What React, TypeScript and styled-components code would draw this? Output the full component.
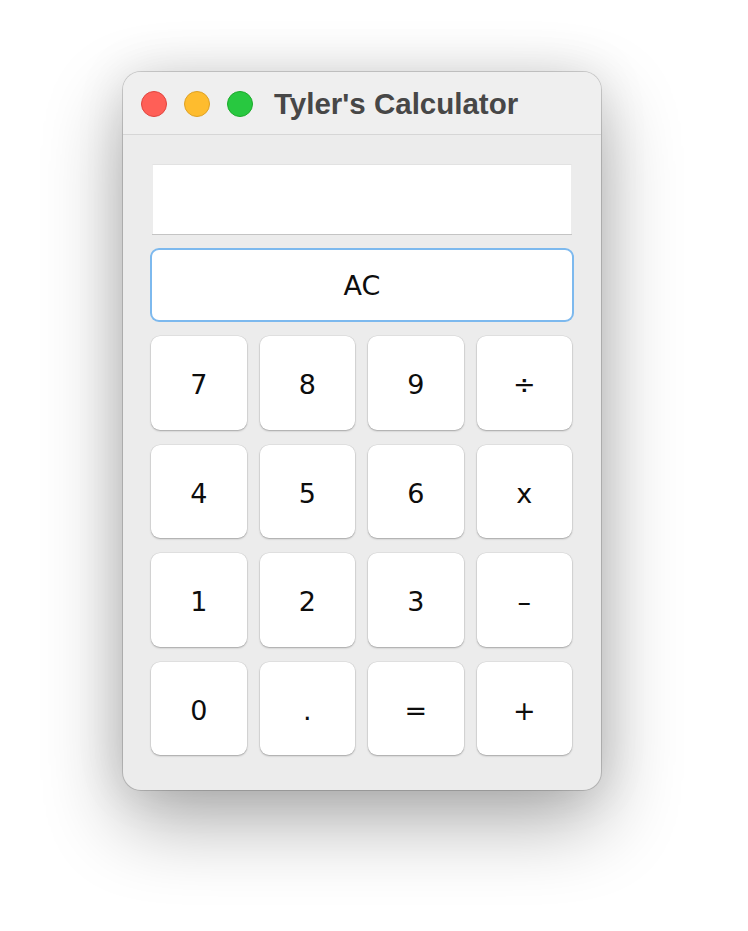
import React from "react";
import styled, { createGlobalStyle } from "styled-components";

const Global = createGlobalStyle`
  html, body { margin: 0; padding: 0; background: #ffffff; }
  body { font-family: "DejaVu Sans", "Liberation Sans", sans-serif; }
`;

const Page = styled.div`
  width: 748px;
  height: 931px;
  box-sizing: border-box;
  padding: 72px 0 0 123px;
  background: #ffffff;
`;

const Window = styled.div`
  width: 478px;
  height: 718px;
  box-sizing: border-box;
  border-radius: 18px;
  background: #ececec;
  overflow: hidden;
  display: flex;
  flex-direction: column;
  box-shadow: 0 0 0 1px rgba(0, 0, 0, 0.16), 0 32px 80px rgba(0, 0, 0, 0.32),
    0 0 50px rgba(0, 0, 0, 0.1);
`;

const TitleBar = styled.div`
  height: 62px;
  flex: none;
  display: flex;
  align-items: center;
  padding-left: 18px;
  background: #efefef;
  border-bottom: 1px solid #d6d6d6;
`;

const Lights = styled.div`
  display: flex;
  gap: 17px;
  margin-right: 21px;
  margin-top: 1px;
`;

const Light = styled.span<{ $fill: string; $edge: string }>`
  width: 26px;
  height: 26px;
  border-radius: 50%;
  box-sizing: border-box;
  background: ${(p) => p.$fill};
  border: 1px solid ${(p) => p.$edge};
`;

const Title = styled.div`
  font-family: "Liberation Sans", Arial, sans-serif;
  font-weight: 700;
  font-size: 29.5px;
  color: #474747;
  line-height: 1;
  margin-top: 1px;
`;

const Content = styled.div`
  flex: 1;
  display: flex;
  flex-direction: column;
  padding: 29px 28px 0 29px;
`;

const Display = styled.div`
  height: 70px;
  margin: 0 1px 0 0;
  box-sizing: border-box;
  background: #ffffff;
  border-top: 1px solid #e2e2e2;
  border-left: 1px solid #ececec;
  border-right: 1px solid #ececec;
  box-shadow: 0 1px 0 #c4c4c4;
`;

const ClearButton = styled.button`
  margin-top: 16px;
  height: 70px;
  width: 420px;
  box-sizing: border-box;
  border: none;
  border-radius: 7px;
  background: #ffffff;
  box-shadow: 0 0 0 2px #7db9ee;
  font-family: "DejaVu Sans", sans-serif;
  font-size: 27px;
  color: #0d0d0d;
  padding: 0;
`;

const Keypad = styled.div`
  margin-top: 16px;
  margin-left: -1px;
  display: grid;
  grid-template-columns: repeat(4, 95.5px);
  grid-template-rows: repeat(4, 93.5px);
  column-gap: 13px;
  row-gap: 15px;
`;

const Key = styled.button`
  border: none;
  border-radius: 9px;
  background: #ffffff;
  box-shadow: 0 0 0 0.5px rgba(0, 0, 0, 0.08), 0 1px 2px rgba(0, 0, 0, 0.28);
  font-family: "DejaVu Sans", sans-serif;
  font-size: 27px;
  color: #0d0d0d;
  padding: 4px 0 0;
  display: flex;
  align-items: center;
  justify-content: center;
`;

const keys = ["7", "8", "9", "÷", "4", "5", "6", "x", "1", "2", "3", "–", "0", ".", "=", "+"];

export default function App() {
  return (
    <Page>
      <Global />
      <Window>
        <TitleBar>
          <Lights>
            <Light $fill="#ff5f57" $edge="#e0443e" />
            <Light $fill="#febc2e" $edge="#dea123" />
            <Light $fill="#28c840" $edge="#1aab29" />
          </Lights>
          <Title>Tyler's Calculator</Title>
        </TitleBar>
        <Content>
          <Display />
          <ClearButton>AC</ClearButton>
          <Keypad>
            {keys.map((k) => (
              <Key key={k}>{k}</Key>
            ))}
          </Keypad>
        </Content>
      </Window>
    </Page>
  );
}
